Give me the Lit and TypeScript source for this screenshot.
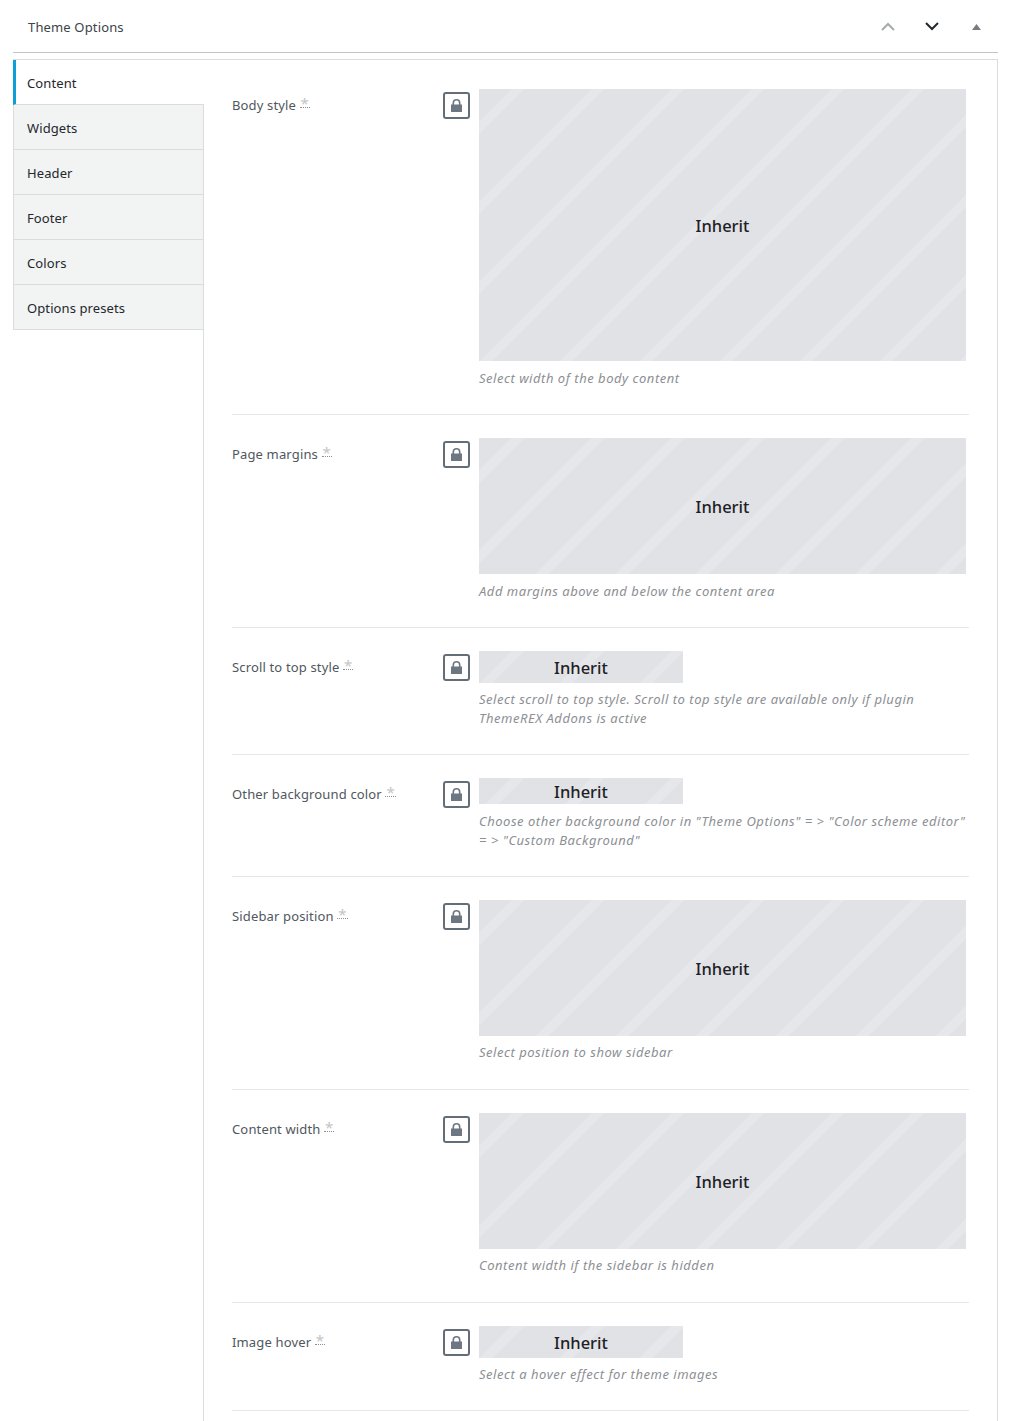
import { LitElement, html, css } from "lit";
import { customElement } from "lit/decorators.js";

type Field = { label: string; size: "big" | "mid" | "small" | "tiny"; desc: string[]; lift?: boolean };

const TABS = ["Content", "Widgets", "Header", "Footer", "Colors", "Options presets"];
const FIELDS: Field[] = [
  { label: "Body style", size: "big", desc: ["Select width of the body content"] },
  { label: "Page margins", size: "mid", desc: ["Add margins above and below the content area"] },
  { label: "Scroll to top style", size: "small", desc: ["Select scroll to top style. Scroll to top style are available only if plugin", "ThemeREX Addons is active"] },
  { label: "Other background color", size: "tiny", desc: ["Choose other background color in \"Theme Options\" = > \"Color scheme editor\"", "= > \"Custom Background\""] },
  { label: "Sidebar position", size: "mid", lift: true, desc: ["Select position to show sidebar"] },
  { label: "Content width", size: "mid", lift: true, desc: ["Content width if the sidebar is hidden"] },
  { label: "Image hover", size: "small", desc: ["Select a hover effect for theme images"] },
];

@customElement("app-root")
export class AppRoot extends LitElement {
  static styles = css`
    :host {
      display: block;
      height: 1421px;
      overflow: hidden;
      background: #fff;
      font-family: "Noto Sans", sans-serif;
      font-size: 13px;
      letter-spacing: 0.15px;
      color: #50575e;
    }
    .wrap { padding: 0 13px; }
    .head {
      height: 53px;
      box-sizing: border-box;
      border-bottom: 1px solid #c3c4c7;
      display: flex;
      align-items: center;
      padding: 1px 0 0 15px;
      color: #3c434a;
    }
    .title { flex: 1; }
    .ctrl { display: flex; align-items: center; }
    .ctrl svg { display: block; }
    .c1 { margin-right: 30px; }
    .c2 { margin-right: 33px; }
    .c3 { margin-right: 17px; }
    .panel {
      margin-top: 6px;
      border-top: 1px solid #dcdcde;
      border-right: 1px solid #dcdcde;
      display: flex;
      height: 1400px;
    }
    .side {
      width: 191px;
      flex: none;
      position: relative;
    }
    .rule {
      position: absolute;
      left: 190px;
      top: 44px;
      bottom: 0;
      width: 1px;
      background: #dcdcde;
    }
    .tab {
      height: 45px;
      box-sizing: border-box;
      display: flex;
      align-items: center;
      padding: 1px 0 0 13px;
      background: #f2f3f3;
      border-left: 1px solid #dcdcde;
      border-bottom: 1px solid #dcdcde;
      color: #23282d;
      letter-spacing: 0.1px;
    }
    .tab.active {
      background: #fff;
      border-left: 3px solid #0e9fd8;
      padding-left: 11px;
    }
    .main { flex: 1; padding: 0 28px; min-width: 0; }
    .row {
      display: flex;
      padding: 23px 0 26px;
      border-bottom: 1px solid #e6e7e8;
    }
    .row:first-child { padding-top: 29px; }
    .label { width: 211px; flex: none; line-height: 19px; padding-top: 7px; }
    .mark {
      color: #c3c4c7;
      border-bottom: 1px dotted #8c8f94;
      font-size: 15px;
      line-height: 15px;
      display: inline-block;
      height: 11px;
      padding: 0 1px;
      vertical-align: 1px;
    }
    .lock {
      width: 27px;
      height: 27px;
      box-sizing: border-box;
      flex: none;
      margin-top: 3px;
      margin-right: 9px;
      border: 2px solid #646e78;
      border-radius: 3px;
      display: flex;
      align-items: center;
      justify-content: center;
    }
    .lock svg { margin-bottom: 1px; }
    .body { flex: 1; min-width: 0; }
    .box {
      display: flex;
      align-items: center;
      justify-content: center;
      font-size: 16.5px;
      font-weight: 500;
      letter-spacing: 0;
      padding-top: 1px;
      box-sizing: border-box;
      color: #1d2125;
      background-color: #e1e2e6;
      background-image: linear-gradient(135deg,
        transparent 20.6%, #e6e7ea 20.6%, #e6e7ea 28.4%, transparent 28.4%,
        transparent 70.6%, #e6e7ea 70.6%, #e6e7ea 78.4%, transparent 78.4%);
      background-size: 80px 80px;
    }
    .big { width: 487px; height: 272px; }
    .mid { width: 487px; height: 136px; }
    .small { width: 204px; height: 32px; }
    .tiny { width: 204px; height: 26px; }
    .desc {
      margin-top: 8px;
      line-height: 19px;
      font-style: italic;
      color: #8c8f94;
      letter-spacing: 0.53px;
    }
    .desc.tight { margin-top: 7px; }
    .desc.lift { margin-top: 7px; padding-bottom: 1px; }
    .desc div { white-space: nowrap; }
  `;

  render() {
    return html`<div class="wrap">
      <div class="head">
        <div class="title">Theme Options</div>
        <div class="ctrl">
          <svg class="c1" width="14" height="9" viewBox="0 0 14 9"><path d="M1 8l6-6 6 6" fill="none" stroke="#a7aaad" stroke-width="2"/></svg>
          <svg class="c2" width="14" height="9" viewBox="0 0 14 9"><path d="M1 1l6 6 6-6" fill="none" stroke="#23282d" stroke-width="2"/></svg>
          <svg class="c3" width="9" height="6" viewBox="0 0 9 6"><path d="M4.500 0L9 6H0z" fill="#787c82"/></svg>
        </div>
      </div>
      <div class="panel">
        <div class="side">
          ${TABS.map((t, i) => html`<div class="tab ${i === 0 ? "active" : ""}">${t}</div>`)}
          <div class="rule"></div>
        </div>
        <div class="main">
          ${FIELDS.map((f) => html`<div class="row">
            <div class="label">${f.label} <span class="mark">*</span></div>
            <div class="lock">
              <svg width="11" height="13" viewBox="0 0 11 13"><path d="M1.500 6V4a4 4 0 0 1 8 0v2h-1.600V4a2.400 2.400 0 0 0-4.800 0v2z M0 5.500h11V12.500a.5.5 0 0 1-.5.5H.5a.5.5 0 0 1-.5-.5z" fill="#6c7781"/></svg>
            </div>
            <div class="body">
              <div class="box ${f.size}">Inherit</div>
              <div class="desc ${f.size === "small" ? "tight" : ""} ${f.lift ? "lift" : ""}">${f.desc.map((d) => html`<div>${d}</div>`)}</div>
            </div>
          </div>`)}
        </div>
      </div>
    </div>`;
  }
}
